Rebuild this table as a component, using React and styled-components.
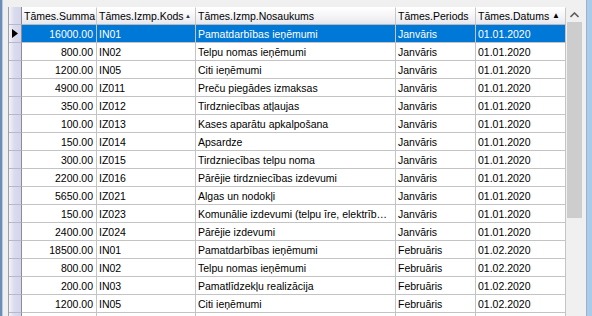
import React from 'react';
import styled, { createGlobalStyle } from 'styled-components';

const GlobalStyle = createGlobalStyle`
  html, body { margin: 0; padding: 0; background: #f0f0f0; }
  body { font-family: "Liberation Sans", Arial, sans-serif; }
`;

const COLS = '13px 75px 99px 200px 80px 90px';

const rows = [
  ['16000.00', 'IN01', 'Pamatdarbības ieņēmumi', 'Janvāris', '01.01.2020'],
  ['800.00', 'IN02', 'Telpu nomas ieņēmumi', 'Janvāris', '01.01.2020'],
  ['1200.00', 'IN05', 'Citi ieņēmumi', 'Janvāris', '01.01.2020'],
  ['4900.00', 'IZ011', 'Preču piegādes izmaksas', 'Janvāris', '01.01.2020'],
  ['350.00', 'IZ012', 'Tirdzniecības atļaujas', 'Janvāris', '01.01.2020'],
  ['100.00', 'IZ013', 'Kases aparātu apkalpošana', 'Janvāris', '01.01.2020'],
  ['150.00', 'IZ014', 'Apsardze', 'Janvāris', '01.01.2020'],
  ['300.00', 'IZ015', 'Tirdzniecības telpu noma', 'Janvāris', '01.01.2020'],
  ['2200.00', 'IZ016', 'Pārējie tirdzniecības izdevumi', 'Janvāris', '01.01.2020'],
  ['5650.00', 'IZ021', 'Algas un nodokļi', 'Janvāris', '01.01.2020'],
  ['150.00', 'IZ023', 'Komunālie izdevumi (telpu īre, elektrīb…', 'Janvāris', '01.01.2020'],
  ['2400.00', 'IZ024', 'Pārējie izdevumi', 'Janvāris', '01.01.2020'],
  ['18500.00', 'IN01', 'Pamatdarbības ieņēmumi', 'Februāris', '01.02.2020'],
  ['800.00', 'IN02', 'Telpu nomas ieņēmumi', 'Februāris', '01.02.2020'],
  ['200.00', 'IN03', 'Pamatlīdzekļu realizācija', 'Februāris', '01.02.2020'],
  ['1200.00', 'IN05', 'Citi ieņēmumi', 'Februāris', '01.02.2020'],
];

const Frame = styled.div`
  display: flex;
  width: 592px;
  height: 316px;
  overflow: hidden;
  background: #f0f0f0;
`;

const LeftEdge = styled.div`
  width: 3px;
  flex: none;
  background: linear-gradient(to right, #6d8db5 0, #6d8db5 2px, #b4cde8 2px);
`;

const RightEdge = styled.div`
  width: 6px;
  flex: none;
  background: linear-gradient(to right, #9fb0c8 0, #9fb0c8 1px, #a9cbec 1px);
`;

const Body = styled.div`
  flex: 1;
  display: flex;
  padding: 7px 3px 0 5px;
  min-width: 0;
`;

const Grid = styled.div`
  display: flex;
  border-left: 1px solid #a0a0a0;
`;

const Table = styled.div`
  width: 557px;
  overflow: hidden;
`;

const Row = styled.div`
  display: grid;
  grid-template-columns: ${COLS};
  height: 18px;
`;

const HeadCell = styled.div`
  box-sizing: border-box;
  border-right: 1px solid #c8c8c8;
  border-bottom: 1px solid #b8b8b8;
  border-top: 1px solid #ffffff;
  background: linear-gradient(to bottom, #ffffff, #f3f3f6 60%, #e6e7ee);
  font-size: 10.5px;
  color: #000;
  padding: 0 2px;
  display: flex;
  align-items: center;
  justify-content: space-between;
  white-space: nowrap;
  overflow: hidden;
`;

const Indicator = styled.div`
  box-sizing: border-box;
  border-right: 1px solid #8c8c9c;
  border-bottom: 1px solid #b8b8c8;
  background: linear-gradient(to right, #f4f4fc, #dcdcf0 40%, #d4d4ea);
  display: flex;
  align-items: center;
  justify-content: center;
`;

const Cell = styled.div`
  box-sizing: border-box;
  border-right: 1px solid #c4c4c4;
  border-bottom: 1px solid #c4c4c4;
  background: ${p => (p.$sel ? '#0078d7' : '#ffffff')};
  color: ${p => (p.$sel ? '#ffffff' : '#000000')};
  font-size: 10.5px;
  padding: 1px ${p => (p.$right ? 3 : 2)}px 0 2px;
  text-align: ${p => (p.$right ? 'right' : 'left')};
  line-height: 16px;
  white-space: nowrap;
  overflow: hidden;
`;

const SortMark = styled.span`
  font-size: ${p => (p.$big ? 8 : 6)}px;
  color: ${p => (p.$big ? '#000' : '#333')};
  margin-right: ${p => (p.$big ? 3 : 2)}px;
  line-height: 1;
`;

const Scrollbar = styled.div`
  width: 17px;
  flex: none;
  background: #f0f0f0;
  display: flex;
  flex-direction: column;
  align-items: center;
`;

const ArrowButton = styled.div`
  height: 15px;
  width: 100%;
  display: flex;
  align-items: center;
  justify-content: center;
`;

const Thumb = styled.div`
  width: 15px;
  height: 196px;
  background: #cdcdcd;
`;

const Pointer = () => (
  <svg width="6" height="9" viewBox="0 0 6 9">
    <path d="M0 0 L6 4.5 L0 9 Z" fill="#000" />
  </svg>
);

const Chevron = () => (
  <svg width="9" height="6" viewBox="0 0 9 6">
    <path d="M0.5 5 L4.5 1 L8.5 5" fill="none" stroke="#606060" strokeWidth="1.6" />
  </svg>
);

export default function App() {
  return (
    <>
      <GlobalStyle />
      <Frame>
        <LeftEdge />
        <Body>
          <Grid>
            <Table>
              <Row>
                <Indicator />
                <HeadCell>Tāmes.Summa</HeadCell>
                <HeadCell>Tāmes.Izmp.Kods<SortMark>▲</SortMark></HeadCell>
                <HeadCell>Tāmes.Izmp.Nosaukums</HeadCell>
                <HeadCell>Tāmes.Periods</HeadCell>
                <HeadCell>Tāmes.Datums<SortMark $big>▲</SortMark></HeadCell>
              </Row>
              {rows.map((r, i) => (
                <Row key={i}>
                  <Indicator>{i === 0 && <Pointer />}</Indicator>
                  <Cell $sel={i === 0} $right>{r[0]}</Cell>
                  <Cell $sel={i === 0}>{r[1]}</Cell>
                  <Cell $sel={i === 0}>{r[2]}</Cell>
                  <Cell $sel={i === 0}>{r[3]}</Cell>
                  <Cell $sel={i === 0}>{r[4]}</Cell>
                </Row>
              ))}
              <Row>
                <Indicator />
                <Cell />
                <Cell />
                <Cell />
                <Cell />
                <Cell />
              </Row>
            </Table>
            <Scrollbar>
              <ArrowButton><Chevron /></ArrowButton>
              <Thumb />
            </Scrollbar>
          </Grid>
        </Body>
        <RightEdge />
      </Frame>
    </>
  );
}
